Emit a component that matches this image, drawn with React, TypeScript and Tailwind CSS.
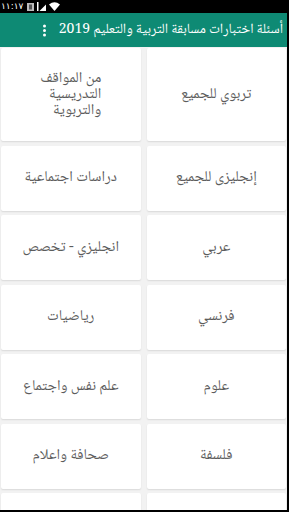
import React from "react";

const items: string[][] = [
  ["تربوي للجميع"],
  ["من المواقف", "التدريسية", "والتربوية"],
  ["إنجليزى للجميع"],
  ["دراسات اجتماعية"],
  ["عربي"],
  ["انجليزي - تخصص"],
  ["فرنسي"],
  ["رياضيات"],
  ["علوم"],
  ["علم نفس واجتماع"],
  ["فلسفة"],
  ["صحافة واعلام"],
  [],
  [],
];

export default function App() {
  return (
    <div className="w-[289px] h-[512px] overflow-hidden flex flex-col bg-black font-['Noto_Naskh_Arabic','Noto_Sans_Arabic',sans-serif]">
      <div className="w-[287px] h-[510px] shrink-0 flex flex-col bg-[#f2f2f2] overflow-hidden">
        {/* status bar */}
        <div className="h-[13px] shrink-0 bg-black flex items-center pl-[1px] gap-[3px] text-white">
          <span className="text-[9px] leading-none font-['DejaVu_Sans',sans-serif]">١١:١٧</span>
          <svg width="7" height="8" viewBox="0 0 7 8" className="ml-[1px]">
            <rect x="0" y="0" width="7" height="8" fill="#bdbdbd" />
            <rect x="2" y="1.5" width="3" height="5" fill="#555" />
          </svg>
          <svg width="9" height="9" viewBox="0 0 9 9">
            <rect x="0" y="0" width="1.5" height="9" fill="#fff" />
            <polygon points="2.5,9 9,9 9,2.5" fill="#fff" />
          </svg>
          <svg width="11" height="9" viewBox="0 0 11 9">
            <path d="M0 2.5 Q5.5 -2 11 2.5 L5.5 9 Z" fill="#fff" />
          </svg>
        </div>
        {/* app bar */}
        <div className="h-[34px] shrink-0 bg-[#0e8a74] flex items-center justify-between pl-[42px] pr-[4px]">
          <svg width="5" height="13" viewBox="0 0 5 13" className="shrink-0">
            <circle cx="2.5" cy="2" r="1.5" fill="#fff" />
            <circle cx="2.5" cy="6.5" r="1.5" fill="#fff" />
            <circle cx="2.5" cy="11" r="1.5" fill="#fff" />
          </svg>
          <div dir="rtl" className="text-white text-[14px] leading-none whitespace-nowrap">
            أسئلة اختبارات مسابقة التربية والتعليم 2019
          </div>
        </div>
        {/* grid */}
        <div dir="rtl" className="grid grid-cols-2 gap-x-[6px] gap-y-[4.5px] px-[1px] pt-[1px]">
          {items.map((lines, i) => (
            <div
              key={i}
              className={`bg-white rounded-[2px] shadow-[0_1px_1.5px_rgba(0,0,0,0.1)] flex items-center justify-center px-[22px] ${
                i < 2 ? "h-[93px]" : "h-[65px]"
              }`}
            >
              {lines.length > 0 && (
                <div className="text-[15px] leading-[16px] text-[#5c5c5c] text-right whitespace-nowrap flex flex-col">
                  {lines.map((l) => (
                    <span key={l}>{l}</span>
                  ))}
                </div>
              )}
            </div>
          ))}
        </div>
      </div>
    </div>
  );
}
